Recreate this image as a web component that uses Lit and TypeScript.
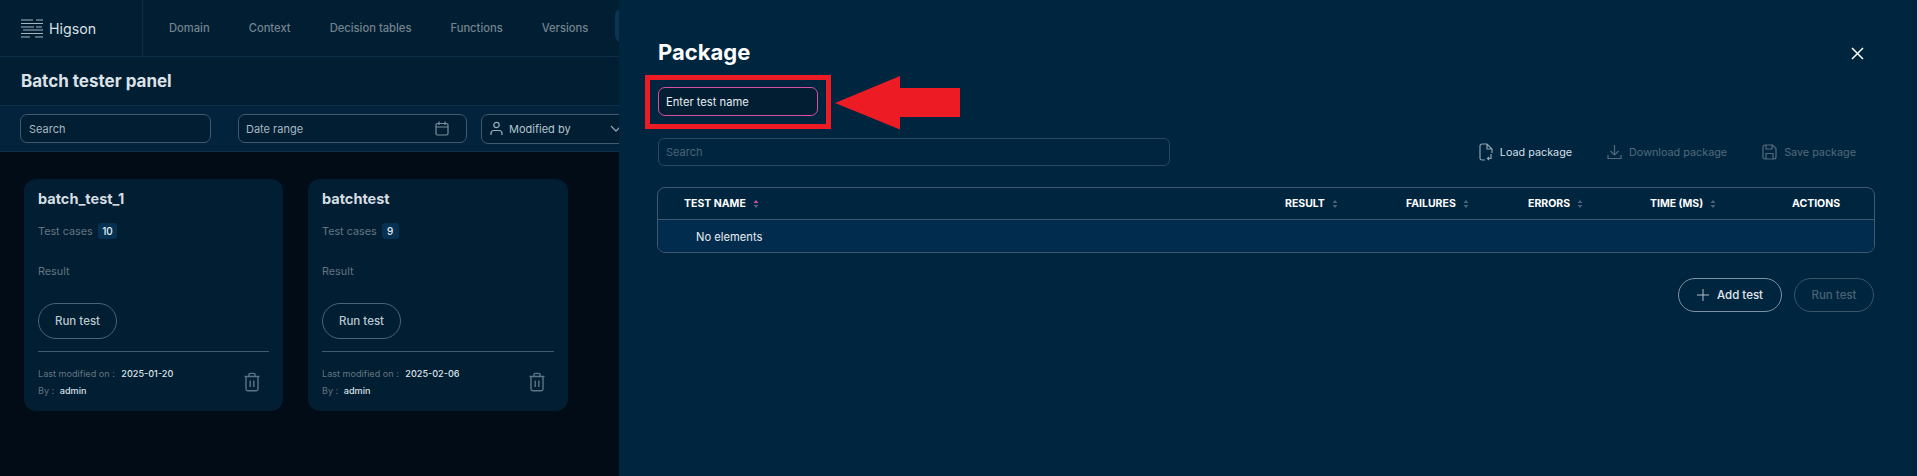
import { LitElement, html, css, svg } from "lit";
import { customElement } from "lit/decorators.js";

const trash = html`<svg class="trash" width="18" height="20" viewBox="0 0 18 20" fill="none" stroke="currentColor" stroke-width="1.4"><path d="M1.5 4.5h15M6 4.500V2.600A1.200 1.200 0 0 1 7.200 1.400h3.600A1.200 1.200 0 0 1 12 2.600v1.900M3 4.500v12.600A1.600 1.600 0 0 0 4.600 18.700h8.800a1.600 1.600 0 0 0 1.600-1.600V4.500M7.200 8.500v6.400M10.800 8.500v6.400"/></svg>`;

const sorter = (active = false) => html`<svg class="sort" width="6" height="10" viewBox="0 0 6 10"><path d="M3 1 5.400 4H.6z" fill=${active ? "#d94fa6" : "#4a6579"}/><path d="M3 9 .6 6h4.800z" fill="#4a6579"/></svg>`;

const logoLines = [
  [0, 1, 12], [15, 1, 22], [0, 4.5, 22], [0, 8, 13], [15, 8, 21], [2, 11, 22],
  [0, 14.5, 22], [0, 18, 9], [14, 18, 22],
];

interface Card { name: string; count: string; date: string; w: string }
const cards: Card[] = [
  { name: "batch_test_1", count: "10", date: "2025-01-20", w: "card-a" },
  { name: "batchtest", count: "9", date: "2025-02-06", w: "card-b" },
];

@customElement("app-root")
export class AppRoot extends LitElement {
  static styles = css`
    :host { display: block; width: 1917px; height: 476px; position: relative; overflow: hidden; background: #010c16; font-family: "Inter", "Liberation Sans", sans-serif; font-size: 11px; color: #fff; }
    * { box-sizing: border-box; }
    header { height: 57px; display: flex; background: #011e33; border-bottom: 1px solid #0c3048; }
    .brand { width: 143px; display: flex; align-items: center; gap: 6px; padding-left: 21px; border-right: 1px solid #0c3048; font-size: 14.2px; color: #d8e0e6; flex: none; }
    nav { display: flex; align-items: center; gap: 39px; padding-left: 26px; color: #73848f; font-size: 11.2px; font-weight: 500; white-space: nowrap; }
    .tab-active { background: #0b3550; color: #fff; height: 35px; padding: 0 20px; border-radius: 8px; display: flex; align-items: center; margin-left: -12px; margin-top: -5px; }
    .title-row { height: 48px; background: #011e33; display: flex; align-items: center; padding: 0 21px; font-size: 17px; font-weight: 700; color: #dce3e8; }
    .filters { height: 47px; background: #03233d; border-top: 1px solid #0c3048; border-bottom: 1px solid #0c3048; display: flex; align-items: center; padding-left: 20px; }
    .field { height: 29px; border: 1px solid #3f5a70; border-radius: 7px; background: #011e33; display: flex; align-items: center; color: #a9b7c1; font-size: 11px; flex: none; }
    .f-search { width: 191px; padding-left: 8px; margin-right: 27px; }
    .f-date { width: 229px; padding: 0 17px 0 7px; justify-content: space-between; margin-right: 14px; }
    .f-mod { width: 150px; padding: 0 8px; height: 30px; gap: 6px; color: #b4c4cf; }
    .f-mod .chev { margin-left: auto; }
    .cards { display: flex; gap: 25px; padding: 27px 24px; }
    .card { height: 232px; background: #011e33; border-radius: 12px; padding: 10px 14px 0 14px; display: flex; flex-direction: column; }
    .card-a { width: 259px; }
    .card-b { width: 260px; }
    .card h3 { margin: 0; font-size: 14.5px; line-height: 20px; font-weight: 700; color: #d5dde3; }
    .cases { display: flex; align-items: center; gap: 5px; margin-top: 14px; height: 16px; color: #64757f; font-size: 10.8px; }
    .badge { background: #053253; color: #e8eef2; font-size: 10px; font-weight: 500; border-radius: 3px; height: 16px; min-width: 17px; padding: 0 4.500px; display: flex; align-items: center; justify-content: center; }
    .result { margin-top: 25px; line-height: 16px; color: #64757f; font-size: 10.8px; }
    .btn { display: flex; align-items: center; justify-content: center; border: 1px solid #4b6477; border-radius: 18px; color: #bcc8d0; font-size: 11.5px; font-weight: 500; flex: none; }
    .card .btn { margin-top: 23px; width: 79px; height: 36px; }
    .rule { height: 1px; background: #3f5a70; margin-top: 12px; flex: none; }
    .meta { display: flex; justify-content: space-between; align-items: center; margin-top: 13px; padding-right: 8px; }
    .meta-lines { font-size: 9.100px; line-height: 17px; color: #64757f; }
    .meta-lines b { font-weight: 500; color: #dbe2e7; margin-left: 4px; }
    .by b { margin-left: 3px; }
    .trash { color: #5c7486; display: block; }

    .panel { position: absolute; left: 619px; top: 0; right: 0; height: 476px; background: #00263f; border-right: 5px solid #03233d; padding: 36px 37px 0 39px; display: flex; flex-direction: column; }
    .p-head { display: flex; justify-content: space-between; align-items: center; height: 32px; }
    .p-head h2 { margin: 0; font-size: 22px; font-weight: 700; color: #fff; }
    .close { margin-right: 11px; margin-top: 3px; display: block; }
    .name-input { width: 160px; height: 29px; margin-top: 19px; border: 1px solid #d94fa6; border-radius: 7px; background: #011e33; padding-left: 7px; display: flex; align-items: center; color: #e6ecf0; font-size: 11.200px; }
    .p-tools { display: flex; align-items: center; justify-content: space-between; margin-top: 22px; padding-right: 19px; }
    .p-search { width: 512px; height: 28px; border: 1px solid #2a475d; border-radius: 6px; padding-left: 7px; display: flex; align-items: center; color: #4b6375; font-size: 11px; }
    .actions { display: flex; gap: 35px; font-size: 10.800px; font-weight: 400; }
    .act { display: flex; align-items: center; gap: 7px; color: #53697a; }
    .act.on { color: #d5dfe6; }
    .act svg { color: #53697a; }
    .act.on svg { color: #8fa2b0; }
    .table { margin-top: 21px; margin-left: -1px; height: 66px; border: 1px solid #3f5a70; border-radius: 8px; overflow: hidden; display: flex; flex-direction: column; }
    .thead { height: 32px; flex: none; display: grid; grid-template-columns: 601px 121px 122px 122px 142px 1fr; align-items: center; padding-left: 26px; border-bottom: 1px solid #3f5a70; font-size: 10.500px; font-weight: 700; color: #fff; }
    .th { display: flex; align-items: center; gap: 7px; }
    .tbody { flex: 1; background: #022c4e; padding: 1px 0 0 38px; display: flex; align-items: center; color: #e6ecf0; font-size: 11.200px; }
    .p-foot { display: flex; justify-content: flex-end; gap: 12px; margin-top: 25px; padding-right: 1px; }
    .p-foot .btn { height: 34px; border-radius: 17px; }
    .add { width: 104px; gap: 8px; color: #e0e7ec; border-color: #7d92a1; }
    .run { width: 80px; color: #4b6375; border-color: #3a5468; }

    .annot { position: absolute; pointer-events: none; }
    .red-box { left: 645px; top: 75px; width: 186px; height: 54px; border: 5px solid #ed1c24; }
    .arrow { left: 835px; top: 75px; }
  `;

  render() {
    return html`
      <header>
        <div class="brand">
          <svg width="22" height="19" viewBox="0 0 22 19" stroke="#aab6bf" stroke-width="1">
            ${logoLines.map(([a, y, b]) => svg`<line x1=${a} x2=${b} y1=${y} y2=${y}></line>`)}
          </svg>
          <span>Higson</span>
        </div>
        <nav>
          <span>Domain</span><span>Context</span><span>Decision tables</span><span>Functions</span><span>Versions</span>
          <span class="tab-active">Batch tester</span>
        </nav>
      </header>
      <div class="title-row">Batch tester panel</div>
      <div class="filters">
        <div class="field f-search">Search</div>
        <div class="field f-date">
          <span>Date range</span>
          <svg width="14" height="15" viewBox="0 0 14 15" fill="none" stroke="#7d8f9c" stroke-width="1.200"><rect x="1" y="2.500" width="12" height="11.500" rx="1.500"/><path d="M1 6h12M4 .5v3.500M10 .5v3.500"/></svg>
        </div>
        <div class="field f-mod">
          <svg width="13" height="15" viewBox="0 0 13 15" fill="none" stroke="#9aabb7" stroke-width="1.200"><circle cx="6.500" cy="4" r="2.700"/><path d="M1 14v-1.500A3 3 0 0 1 4 9.500h5a3 3 0 0 1 3 3V14"/></svg>
          <span>Modified by</span>
          <svg class="chev" width="12" height="8" viewBox="0 0 12 8" fill="none" stroke="#8fa0ac" stroke-width="1.300"><path d="m1 1 5 5 5-5"/></svg>
        </div>
      </div>
      <div class="cards">
        ${cards.map((c) => html`
          <div class="card ${c.w}">
            <h3>${c.name}</h3>
            <div class="cases"><span>Test cases</span><span class="badge">${c.count}</span></div>
            <div class="result">Result</div>
            <div class="btn">Run test</div>
            <div class="rule"></div>
            <div class="meta">
              <div class="meta-lines">
                <div>Last modified on : <b>${c.date}</b></div>
                <div class="by">By : <b>admin</b></div>
              </div>
              ${trash}
            </div>
          </div>`)}
      </div>

      <section class="panel">
        <div class="p-head">
          <h2>Package</h2>
          <svg class="close" width="13" height="13" viewBox="0 0 13 13" stroke="#fff" stroke-width="1.500"><path d="m1 1 11 11M12 1 1 12"/></svg>
        </div>
        <div class="name-input">Enter test name</div>
        <div class="p-tools">
          <div class="p-search">Search</div>
          <div class="actions">
            <div class="act on">
              <svg width="14" height="18" viewBox="0 0 14 18" fill="none" stroke="currentColor" stroke-width="1.200"><path d="M6 17H3a2 2 0 0 1-2-2V3a2 2 0 0 1 2-2h5l5 5v4M8 1v5h5M12 11v4.500H8.500M10 14l-1.500 1.500L10 17"/></svg>
              <span>Load package</span>
            </div>
            <div class="act">
              <svg width="15" height="16" viewBox="0 0 15 16" fill="none" stroke="currentColor" stroke-width="1.200"><path d="M7.500 1v10M3.500 7l4 4 4-4M1 11v3.500h13V11"/></svg>
              <span>Download package</span>
            </div>
            <div class="act">
              <svg width="15" height="16" viewBox="0 0 15 16" fill="none" stroke="currentColor" stroke-width="1.200"><path d="M1 3a2 2 0 0 1 2-2h7.500L14 4.500V13a2 2 0 0 1-2 2H3a2 2 0 0 1-2-2zM4 1v4h6V1M4 15V9.500h7V15"/></svg>
              <span>Save package</span>
            </div>
          </div>
        </div>
        <div class="table">
          <div class="thead">
            <div class="th">TEST NAME ${sorter(true)}</div>
            <div class="th">RESULT ${sorter()}</div>
            <div class="th">FAILURES ${sorter()}</div>
            <div class="th">ERRORS ${sorter()}</div>
            <div class="th">TIME (MS) ${sorter()}</div>
            <div class="th">ACTIONS</div>
          </div>
          <div class="tbody">No elements</div>
        </div>
        <div class="p-foot">
          <div class="btn add">
            <svg width="12" height="12" viewBox="0 0 12 12" stroke="#aebcc6" stroke-width="1"><path d="M6 0v12M0 6h12"/></svg>
            <span>Add test</span>
          </div>
          <div class="btn run">Run test</div>
        </div>
      </section>

      <div class="annot red-box"></div>
      <svg class="annot arrow" width="126" height="55" viewBox="0 0 126 55"><path d="M0 28 65 1v12h60v29H65v12.500z" fill="#ed1c24"/></svg>
    `;
  }
}
